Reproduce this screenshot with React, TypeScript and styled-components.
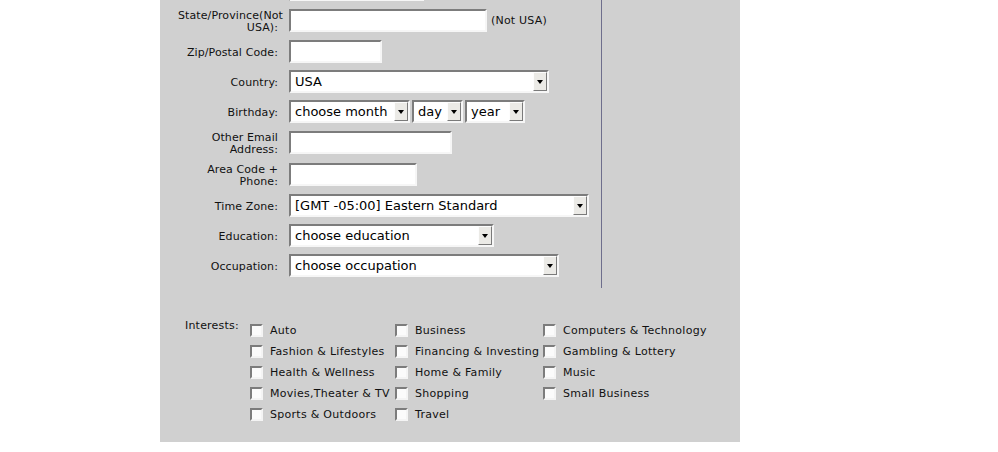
import styled, { createGlobalStyle } from 'styled-components';

const GlobalStyle = createGlobalStyle`
  html, body {
    margin: 0;
    padding: 0;
    background: #fff;
    overflow: hidden;
  }
  body {
    font-family: 'DejaVu Sans', Verdana, sans-serif;
  }
`;

const Panel = styled.div`
  width: 580px;
  margin: -22px 0 0 160px;
  padding-bottom: 17px;
  background: #d0d0d0;
  color: #111;
`;

const TopSection = styled.div`
  display: flex;
`;

const FormColumn = styled.div`
  box-sizing: border-box;
  width: 442px;
  padding-bottom: 11px;
  border-right: 1px solid #6e6e8c;
`;

const FormGrid = styled.div`
  display: grid;
  grid-template-columns: 118px 1fr;
  column-gap: 11px;
  row-gap: 7px;
  align-items: center;
`;

const Label = styled.div`
  padding-top: 1.5px;
  margin-bottom: -1.5px;
  font-size: 11px;
  line-height: 12.5px;
  letter-spacing: 0.1px;
  text-align: right;
  white-space: nowrap;
`;

const LabelLine = styled.span<{ $overhang?: number }>`
  display: block;
  margin-right: ${p => (p.$overhang ? -p.$overhang : 0)}px;
`;

const FieldCell = styled.div`
  display: flex;
  align-items: center;
  gap: 4px;
`;

const TextInput = styled.input<{ $w: number }>`
  box-sizing: border-box;
  width: ${p => p.$w}px;
  height: 23px;
  margin: 0;
  padding: 0 4px;
  border: 2px solid;
  border-color: #7c7c7c #f6f6f6 #f6f6f6 #7c7c7c;
  background: #fff;
  font: 13px 'DejaVu Sans', sans-serif;
  outline: none;
`;

const Hint = styled.span`
  font-size: 11px;
  letter-spacing: 0.2px;
`;

const SelectBox = styled.div<{ $w: number }>`
  box-sizing: border-box;
  display: flex;
  align-items: stretch;
  width: ${p => p.$w}px;
  height: 23px;
  border: 2px solid;
  border-color: #7c7c7c #f6f6f6 #f6f6f6 #7c7c7c;
  background: #fff;
`;

const NativeSelect = styled.select`
  flex: 1;
  min-width: 0;
  appearance: none;
  -webkit-appearance: none;
  margin: 0;
  padding: 0 0 0 4px;
  border: 0;
  background: transparent;
  color: #000;
  font: 13px 'DejaVu Sans', sans-serif;
  outline: none;
`;

const ArrowButton = styled.span`
  box-sizing: border-box;
  display: flex;
  align-items: center;
  justify-content: center;
  width: 14px;
  border: 1px solid;
  border-color: #fdfdfd #7a7a7a #7a7a7a #fdfdfd;
  background: #ebeae6;

  &::after {
    content: '';
    border-left: 3.5px solid transparent;
    border-right: 3.5px solid transparent;
    border-top: 4px solid #000;
  }
`;

const BirthdayGroup = styled.div`
  display: flex;
  gap: 2px;
`;

const InterestsRow = styled.div`
  display: flex;
  margin-top: 32px;
`;

const InterestsLabel = styled.div`
  box-sizing: border-box;
  width: 90px;
  padding-left: 25px;
  margin-top: -1px;
  font-size: 11px;
  line-height: 13px;
  letter-spacing: 0.2px;
`;

const InterestGrid = styled.div`
  display: grid;
  grid-template-columns: 145px 148px auto;
  grid-auto-rows: 21px;
  align-items: center;
`;

const CheckItem = styled.label`
  display: flex;
  align-items: center;
  gap: 7px;
  font-size: 11px;
  letter-spacing: 0.28px;
  white-space: nowrap;
`;

const Checkbox = styled.input`
  box-sizing: border-box;
  appearance: none;
  -webkit-appearance: none;
  width: 13px;
  height: 13px;
  margin: 0;
  border: 2px solid;
  border-color: #7c7c7c #f4f4f4 #f4f4f4 #7c7c7c;
  background: #fbfbfb;
`;

function Select({ w, value }: { w: number; value: string }) {
  return (
    <SelectBox $w={w}>
      <NativeSelect defaultValue={value}>
        <option value={value}>{value}</option>
      </NativeSelect>
      <ArrowButton />
    </SelectBox>
  );
}

const interests = [
  'Auto', 'Business', 'Computers & Technology',
  'Fashion & Lifestyles', 'Financing & Investing', 'Gambling & Lottery',
  'Health & Wellness', 'Home & Family', 'Music',
  'Movies,Theater & TV', 'Shopping', 'Small Business',
  'Sports & Outdoors', 'Travel',
];

export default function App() {
  return (
    <>
      <GlobalStyle />
      <Panel>
        <TopSection>
          <FormColumn>
            <FormGrid>
              {/* row scrolled above the top edge: only its input's bottom shows */}
              <Label />
              <FieldCell><TextInput $w={135} /></FieldCell>

              <Label>
                <LabelLine $overhang={5}>State/Province(Not</LabelLine>
                <LabelLine>USA):</LabelLine>
              </Label>
              <FieldCell>
                <TextInput $w={198} />
                <Hint>(Not USA)</Hint>
              </FieldCell>

              <Label>Zip/Postal Code:</Label>
              <FieldCell><TextInput $w={93} /></FieldCell>

              <Label>Country:</Label>
              <FieldCell><Select w={260} value="USA" /></FieldCell>

              <Label>Birthday:</Label>
              <BirthdayGroup>
                <Select w={121} value="choose month" />
                <Select w={51} value="day" />
                <Select w={60} value="year" />
              </BirthdayGroup>

              <Label>
                <LabelLine>Other Email</LabelLine>
                <LabelLine>Address:</LabelLine>
              </Label>
              <FieldCell><TextInput $w={163} /></FieldCell>

              <Label>
                <LabelLine>Area Code +</LabelLine>
                <LabelLine>Phone:</LabelLine>
              </Label>
              <FieldCell><TextInput $w={128} /></FieldCell>

              <Label>Time Zone:</Label>
              <FieldCell><Select w={300} value="[GMT -05:00] Eastern Standard" /></FieldCell>

              <Label>Education:</Label>
              <FieldCell><Select w={205} value="choose education" /></FieldCell>

              <Label>Occupation:</Label>
              <FieldCell><Select w={270} value="choose occupation" /></FieldCell>
            </FormGrid>
          </FormColumn>
        </TopSection>

        <InterestsRow>
          <InterestsLabel>Interests:</InterestsLabel>
          <InterestGrid>
            {interests.map(name => (
              <CheckItem key={name}>
                <Checkbox type="checkbox" />
                {name}
              </CheckItem>
            ))}
          </InterestGrid>
        </InterestsRow>
      </Panel>
    </>
  );
}
